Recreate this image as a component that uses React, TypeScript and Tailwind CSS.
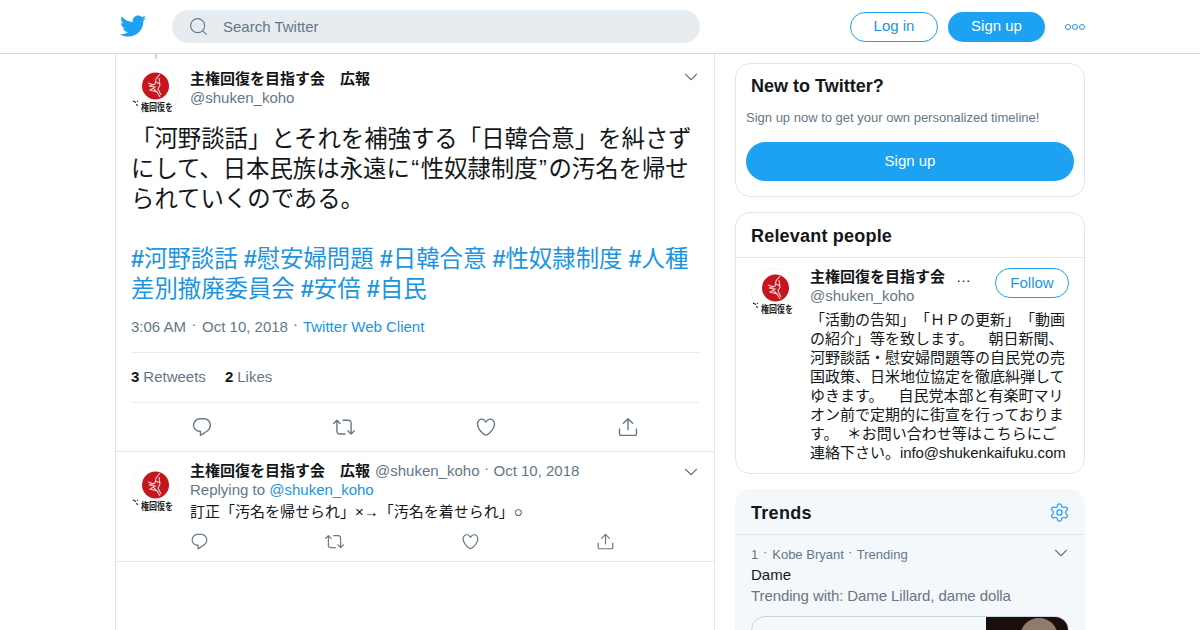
import { ChevronDown, Search, Settings } from "lucide-react"
import { FaTwitter } from "react-icons/fa"

const fontStack = "font-['Liberation_Sans','Noto_Sans_CJK_JP',sans-serif] [text-spacing-trim:space-all]"

const Avatar = ({ size, className = "" }: { size: number; className?: string }) => (
  <svg width={size} height={size} viewBox="0 0 48 48" className={`shrink-0 ${className}`}>
    <circle cx="24" cy="24" r="23.5" fill="#fff" stroke="#f4f6f8" />
    <circle cx="24.5" cy="20" r="13.5" fill="#c4161c" />
    <path d="M29 8l-4 5-1 5-6 2 6 1-5 3 7 2 3 5M28 12l1 7-2 4 3 6M22 22l5 5M17 17l6 2M25 16l4 2" fill="none" stroke="#f3cfcf" strokeWidth="1.1" />
    <text transform="translate(10 45) scale(1 1.3)" x="0" y="0" fontSize="8" fontWeight="700" fill="#222" fontFamily="'Noto Sans CJK JP',sans-serif">権回復を</text>
    <path d="M2 35l3 1.5M5 38.5l2 1M6 35l1 .5" stroke="#222" strokeWidth="1.2" />
  </svg>
)

const ActionIcon = ({ d, size }: { d: string; size: number }) => (
  <svg width={size} height={size} viewBox="0 0 24 24" fill="#657786">
    <path d={d} />
  </svg>
)

const replyPath =
  "M14.046 2.242l-4.148-.01h-.002c-4.374 0-7.8 3.427-7.8 7.802 0 4.098 3.186 7.206 7.465 7.37v3.828c0 .108.044.286.12.403.142.225.384.347.632.347.138 0 .277-.038.402-.118.264-.168 6.473-4.14 8.088-5.506 1.902-1.61 3.04-3.97 3.043-6.312v-.017c-.006-4.367-3.43-7.787-7.8-7.788zm3.787 12.972c-1.134.96-4.862 3.405-6.772 4.643V16.67c0-.414-.335-.75-.75-.75h-.396c-3.66 0-6.318-2.476-6.318-5.886 0-3.534 2.768-6.302 6.3-6.302l4.147.01h.002c3.532 0 6.3 2.766 6.302 6.296-.003 1.91-.942 3.844-2.514 5.176z"
const retweetPath =
  "M23.77 15.67c-.292-.293-.767-.293-1.06 0l-2.22 2.22V7.65c0-2.068-1.683-3.75-3.75-3.75h-5.85c-.414 0-.75.336-.75.75s.336.75.75.75h5.85c1.24 0 2.25 1.01 2.25 2.25v10.24l-2.22-2.22c-.293-.293-.768-.293-1.06 0s-.294.768 0 1.06l3.5 3.5c.145.147.337.22.53.22s.383-.072.53-.22l3.5-3.5c.294-.292.294-.767 0-1.06zm-10.66 3.28H7.26c-1.24 0-2.25-1.01-2.25-2.25V6.46l2.22 2.22c.148.147.34.22.532.22s.384-.073.53-.22c.293-.293.293-.768 0-1.06l-3.5-3.5c-.293-.294-.768-.294-1.06 0l-3.5 3.5c-.294.292-.294.767 0 1.06s.767.293 1.06 0l2.22-2.22V16.7c0 2.068 1.683 3.75 3.75 3.75h5.85c.414 0 .75-.336.75-.75s-.337-.75-.75-.75z"
const likePath =
  "M12 21.638h-.014C9.403 21.59 1.95 14.856 1.95 8.478c0-3.064 2.525-5.754 5.403-5.754 2.29 0 3.83 1.58 4.646 2.73.814-1.148 2.354-2.73 4.645-2.73 2.88 0 5.404 2.69 5.404 5.755 0 6.376-7.454 13.11-10.037 13.157H12zM7.354 4.225c-2.08 0-3.903 1.988-3.903 4.255 0 5.74 7.034 11.596 8.55 11.658 1.518-.062 8.55-5.917 8.55-11.658 0-2.267-1.823-4.255-3.903-4.255-2.528 0-3.94 2.936-3.952 2.965-.23.562-1.156.562-1.387 0-.014-.03-1.425-2.965-3.954-2.965z"
const sharePath =
  "M17.53 7.47l-5-5c-.293-.293-.768-.293-1.06 0l-5 5c-.294.293-.294.768 0 1.06s.767.294 1.06 0l3.72-3.72V15c0 .414.336.75.75.75s.75-.336.75-.75V4.81l3.72 3.72c.146.147.338.22.53.22s.384-.072.53-.22c.293-.293.293-.767 0-1.06zM19.708 21.944H4.292C3.028 21.944 2 20.916 2 19.652V14c0-.414.336-.75.75-.75s.75.336.75.75v5.652c0 .437.355.792.792.792h15.416c.437 0 .792-.355.792-.792V14c0-.414.336-.75.75-.75s.75.336.75.75v5.652c0 1.264-1.028 2.292-2.292 2.292z"

const hashtags = ["河野談話", "慰安婦問題", "日韓合意", "性奴隷制度", "人種差別撤廃委員会", "安倍", "自民"]

// raised middle dot used between timestamps
const Dot = ({ width }: { width: string }) => (
  <span className={`${width} text-center relative top-[-3px]`}>·</span>
)

const Header = () => (
  <header className="h-[54px] border-b border-[#d5d9dc] bg-white flex items-center justify-center">
    <div className="w-[970px] flex items-center">
      <FaTwitter className="text-[#1da1f2] w-[26px] h-[26px] ml-[5px] mt-[-1px]" />
      <div className="ml-[26px] w-[528px] h-[33px] rounded-full bg-[#e6ecf0] flex items-center pl-[16px] text-[15px]">
        <Search className="w-[21px] h-[21px] text-[#657786]" strokeWidth={1.2} />
        <span className="ml-[14px] text-[#657786] mt-[1px]">Search Twitter</span>
      </div>
      <button className="ml-[150px] w-[88px] h-[30px] rounded-full border border-[#1da1f2] text-[15px] text-[#1b95e0] flex items-center justify-center">
        Log in
      </button>
      <button className="ml-[10px] w-[97px] h-[30px] rounded-full bg-[#1da1f2] text-[15px] text-white flex items-center justify-center">
        Sign up
      </button>
      <div className="ml-[20px] flex gap-[1px]">
        <span className="w-[6px] h-[6px] rounded-full border-[1.5px] border-[#1b95e0]" />
        <span className="w-[6px] h-[6px] rounded-full border-[1.5px] border-[#1b95e0]" />
        <span className="w-[6px] h-[6px] rounded-full border-[1.5px] border-[#1b95e0]" />
      </div>
    </div>
  </header>
)

const MainTweet = () => (
  <div className="px-[15px] border-b border-[#e1e6ea]">
    <div className="w-[2px] h-[5px] bg-[#ccd6dd] ml-[24px]" />
    <div className="flex mt-[7px]">
      <Avatar size={48} />
      <div className="ml-[11px] flex-1 pt-[3px]">
        <div className="text-[15px] leading-[20px] font-bold text-[#14171a]">主権回復を目指す会　広報</div>
        <div className="text-[15px] leading-[18px] text-[#657786]">@shuken_koho</div>
      </div>
      <ChevronDown className="w-[22px] h-[22px] text-[#657786] mr-[-3px]" strokeWidth={1.2} />
    </div>
    <p className="mt-[10px] text-[23.4px] leading-[30px] text-[#14171a] w-[568px]">
      「河野談話」とそれを補強する「日韓合意」を糾さずにして、日本民族は永遠に
      <span className="px-[1.5px]">“</span>性奴隷制度<span className="px-[1.5px]">”</span>
      の汚名を帰せられていくのである。
    </p>
    <p className="mt-[30px] text-[23.4px] leading-[30px] text-[#1b95e0] w-[568px] [word-spacing:-0.4px]">
      {hashtags.map((tag) => (
        <span key={tag}>
          <span className="font-bold">#</span>
          {tag}{" "}
        </span>
      ))}
    </p>
    <div className="mt-[13px] flex text-[15px] leading-[20px] text-[#657786]">
      <span>3:06 AM</span>
      <Dot width="w-[16px]" />
      <span>Oct 10, 2018</span>
      <Dot width="w-[15px]" />
      <span className="text-[#1b95e0]">Twitter Web Client</span>
    </div>
    <div className="mt-[15px] border-t border-[#e6ecf0] h-[50px] flex items-center text-[15px] text-[#657786]">
      <span className="font-bold text-[#14171a]">3</span>
      <span className="ml-[4px]">Retweets</span>
      <span className="ml-[19px] font-bold text-[#14171a]">2</span>
      <span className="ml-[4px]">Likes</span>
    </div>
    <div className="border-t border-[#e6ecf0] h-[49px] flex items-center pl-[60px]">
      <div className="w-[142px]"><ActionIcon d={replyPath} size={22} /></div>
      <div className="w-[142px]"><ActionIcon d={retweetPath} size={22} /></div>
      <div className="w-[142px]"><ActionIcon d={likePath} size={22} /></div>
      <ActionIcon d={sharePath} size={22} />
    </div>
  </div>
)

const ReplyTweet = () => (
  <div className="px-[15px] h-[110px] border-b border-[#e1e6ea] flex pt-[9px]">
    <Avatar size={48} className="mt-[4px]" />
    <div className="ml-[11px] flex-1">
      <div className="flex items-start justify-between h-[20px]">
        <div className="flex text-[15px] leading-[20px] text-[#657786]">
          <span className="font-bold text-[#14171a]">主権回復を目指す会　広報</span>
          <span className="ml-[5px]">@shuken_koho</span>
          <Dot width="w-[14px]" />
          <span>Oct 10, 2018</span>
        </div>
        <ChevronDown className="w-[22px] h-[22px] text-[#657786] mr-[-3px]" strokeWidth={1.2} />
      </div>
      <div className="text-[15px] leading-[18px] text-[#657786]">
        Replying to <span className="text-[#1b95e0]">@shuken_koho</span>
      </div>
      <div className="mt-[3px] text-[15px] leading-[20px] text-[#14171a]">訂正「汚名を帰せられ」×→「汚名を着せられ」○</div>
      <div className="mt-[10px] flex items-center">
        <div className="w-[135px]"><ActionIcon d={replyPath} size={19} /></div>
        <div className="w-[136px]"><ActionIcon d={retweetPath} size={19} /></div>
        <div className="w-[135px]"><ActionIcon d={likePath} size={19} /></div>
        <ActionIcon d={sharePath} size={19} />
      </div>
    </div>
  </div>
)

const NewToTwitter = () => (
  <section className="h-[134px] rounded-[15px] border border-[#e1e6ea] px-[10px]">
    <h2 className="mt-[10px] ml-[5px] text-[18px] leading-[25px] font-bold text-[#14171a]">New to Twitter?</h2>
    <p className="mt-[10px] text-[13px] leading-[18px] text-[#657786]">Sign up now to get your own personalized timeline!</p>
    <button className="mt-[15px] w-full h-[39px] rounded-full bg-[#1da1f2] text-white text-[15px] font-normal">Sign up</button>
  </section>
)

const RelevantPeople = () => (
  <section className="mt-[15px] h-[262px] rounded-[15px] border border-[#e1e6ea]">
    <h2 className="h-[45px] px-[15px] pt-[2px] flex items-center border-b border-[#e1e6ea] text-[18px] font-bold text-[#14171a] tracking-[0.2px]">Relevant people</h2>
    <div className="flex px-[15px] pt-[10px]">
      <Avatar size={48} />
      <div className="ml-[11px] flex-1">
        <div className="flex items-start justify-between">
          <div className="mt-[-1px]">
            <div className="w-[161px] flex justify-between text-[15px] leading-[20px] font-bold text-[#14171a]">
              <span>主権回復を目指す会</span>
              <span className="font-normal">…</span>
            </div>
            <div className="text-[15px] leading-[18px] text-[#657786]">@shuken_koho</div>
          </div>
          <button className="w-[74px] h-[30px] rounded-full border border-[#1da1f2] text-[15px] text-[#1b95e0]">Follow</button>
        </div>
        <p className="mt-[5px] text-[15px] leading-[19px] text-[#14171a] w-[258px]">
          「活動の告知」「ＨＰの更新」「動画の紹介」等を致します。　朝日新聞、河野談話・慰安婦問題等の自民党の売国政策、日米地位協定を徹底糾弾してゆきます。　自民党本部と有楽町マリオン前で定期的に街宣を行っております。{"\u00a0 "}＊お問い合わせ等はこちらにご連絡下さい。
          <span className="tracking-[-0.1px]">info@shukenkaifuku.com</span>
        </p>
      </div>
    </div>
  </section>
)

const Trends = () => (
  <section className="mt-[15px] h-[160px] rounded-t-[15px] bg-[#f5f8fa]">
    <div className="h-[46px] px-[16px] flex items-center justify-between border-b border-[#e1e6ea]">
      <h2 className="mt-[3px] text-[18px] font-bold text-[#14171a] tracking-[0.3px]">Trends</h2>
      <Settings className="w-[21px] h-[21px] text-[#1da1f2] mr-[-1px] mt-[1px]" strokeWidth={1.4} />
    </div>
    <div className="px-[16px] pt-[10px]">
      <div className="h-[19px] flex items-start justify-between text-[13px] leading-[20px] text-[#657786]">
        <div className="flex">
          <span>1</span>
          <Dot width="w-[14px]" />
          <span>Kobe Bryant</span>
          <Dot width="w-[13px]" />
          <span>Trending</span>
        </div>
        <ChevronDown className="w-[22px] h-[22px] mr-[-3px] mt-[-3px]" strokeWidth={1.2} />
      </div>
      <div className="text-[15px] leading-[21px] text-[#14171a]">Dame</div>
      <div className="text-[15px] leading-[21px] text-[#657786] tracking-[-0.1px]">Trending with: Dame Lillard, dame dolla</div>
      <div className="mt-[10px] h-[40px] rounded-t-[14px] border border-[#ccd6dd] overflow-hidden flex justify-end">
        <div className="w-[82px] h-full bg-[#1a0f0d] flex justify-center items-start pl-[24px]">
          <div className="w-[38px] h-[30px] rounded-t-full bg-[#8f7a6c] mt-[1px]" />
        </div>
      </div>
    </div>
  </section>
)

export default function App() {
  return (
    <div className={`${fontStack} w-[1200px] h-[630px] overflow-hidden bg-white`}>
      <Header />
      <main className="flex justify-center gap-[20px]">
        <div className="w-[600px] h-[576px] border-x border-[#e1e6ea]">
          <MainTweet />
          <ReplyTweet />
        </div>
        <aside className="w-[350px] pt-[9px]">
          <NewToTwitter />
          <RelevantPeople />
          <Trends />
        </aside>
      </main>
    </div>
  )
}
